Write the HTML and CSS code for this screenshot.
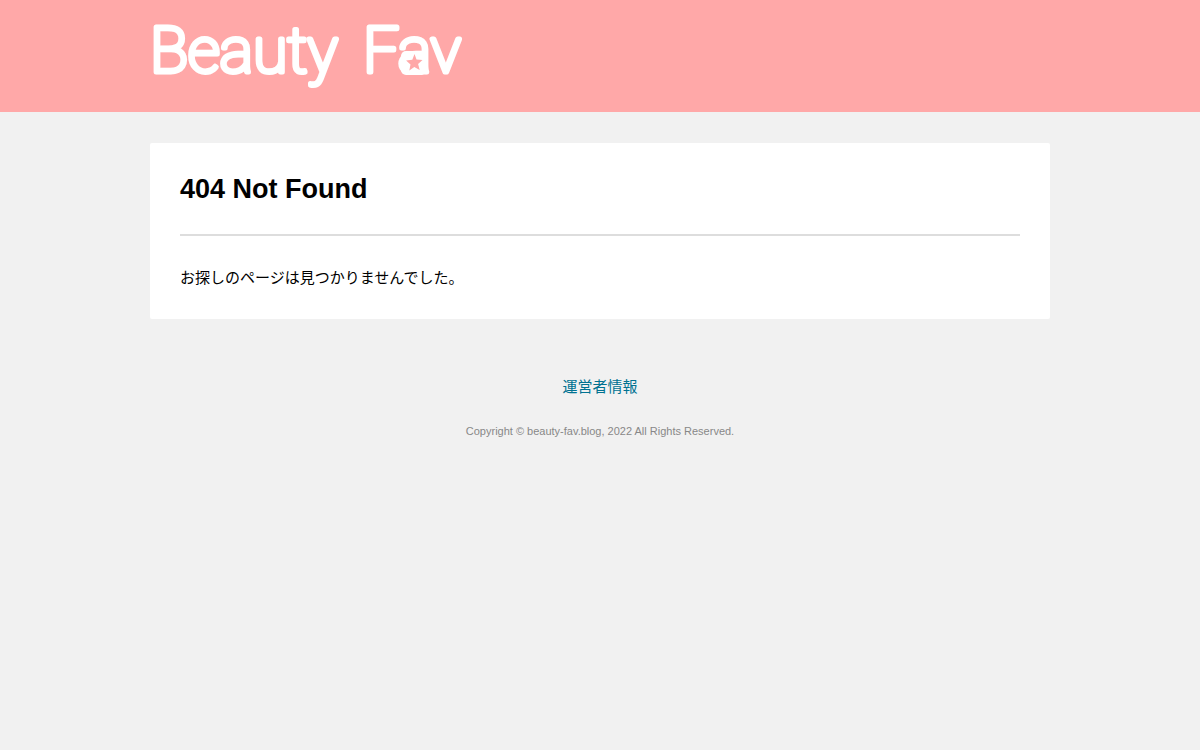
FILE: index.html
```html
<!DOCTYPE html>
<html lang="ja">
<head>
<meta charset="utf-8">
<meta name="viewport" content="width=device-width, initial-scale=1">
<title>404 Not Found | Beauty Fav</title>
<link rel="stylesheet" href="styles.css">
</head>
<body>
<header class="site-header">
  <div class="container">
    <a class="logo" href="/">
      <svg class="logo-image" width="320" height="90" viewBox="0 0 320 90" role="img" aria-label="Beauty Fav">
        <text class="logo-text" x="0" y="62">Beauty</text>
        <text class="logo-text" x="213" y="62">Fav</text>
        <rect x="251" y="41" width="26" height="24" rx="5" fill="#fff"/>
        <path d="M264.500 44l2 5.600 6 .4-4.400 4 1.600 6-5.400-3-5 3.600 1.200-6-4.400-4 6.200-.8z" fill="#ffa8a8"/>
      </svg>
    </a>
  </div>
</header>
<main class="container">
  <article class="card">
    <h1 class="card-title">404 Not Found</h1>
    <p class="card-text">お探しのページは見つかりませんでした。</p>
  </article>
</main>
<footer class="site-footer">
  <a class="footer-link" href="/about">運営者情報</a>
  <p class="copyright">Copyright © beauty-fav.blog, 2022 All Rights Reserved.</p>
</footer>
</body>
</html>
```
FILE: styles.css
```css
* {
  box-sizing: border-box;
}

body {
  margin: 0;
  background: #f1f1f1;
  color: #000;
  font-family: "Liberation Sans", "Noto Sans CJK JP", sans-serif;
  font-size: 15px;
  line-height: 23px;
}

.container {
  width: 100%;
  max-width: 900px;
  margin: 0 auto;
}

.site-header {
  padding: 10px 0 12px;
  background: #ffa8a8;
}

.logo {
  display: block;
}

.logo-image {
  display: block;
  max-width: 100%;
  overflow: visible;
}

.logo-text {
  fill: #fff;
  stroke: #fff;
  stroke-width: 5px;
  stroke-linejoin: round;
  font-family: Roboto, sans-serif;
  font-size: 63px;
  font-weight: 100;
}

.card {
  margin-top: 31px;
  padding: 30px;
  background: #fff;
  border-radius: 2px;
}

.card-title {
  margin: 0 0 30px;
  padding-bottom: 29px;
  border-bottom: 2px solid #ddd;
  font-size: 27px;
  line-height: 32px;
}

.card-text {
  margin: 0;
}

.site-footer {
  padding: 56px 0 30px;
  text-align: center;
}

.footer-link {
  color: #007291;
  text-decoration: none;
}

.copyright {
  margin: 22px 0 0;
  color: #888;
  font-size: 11px;
}
```
